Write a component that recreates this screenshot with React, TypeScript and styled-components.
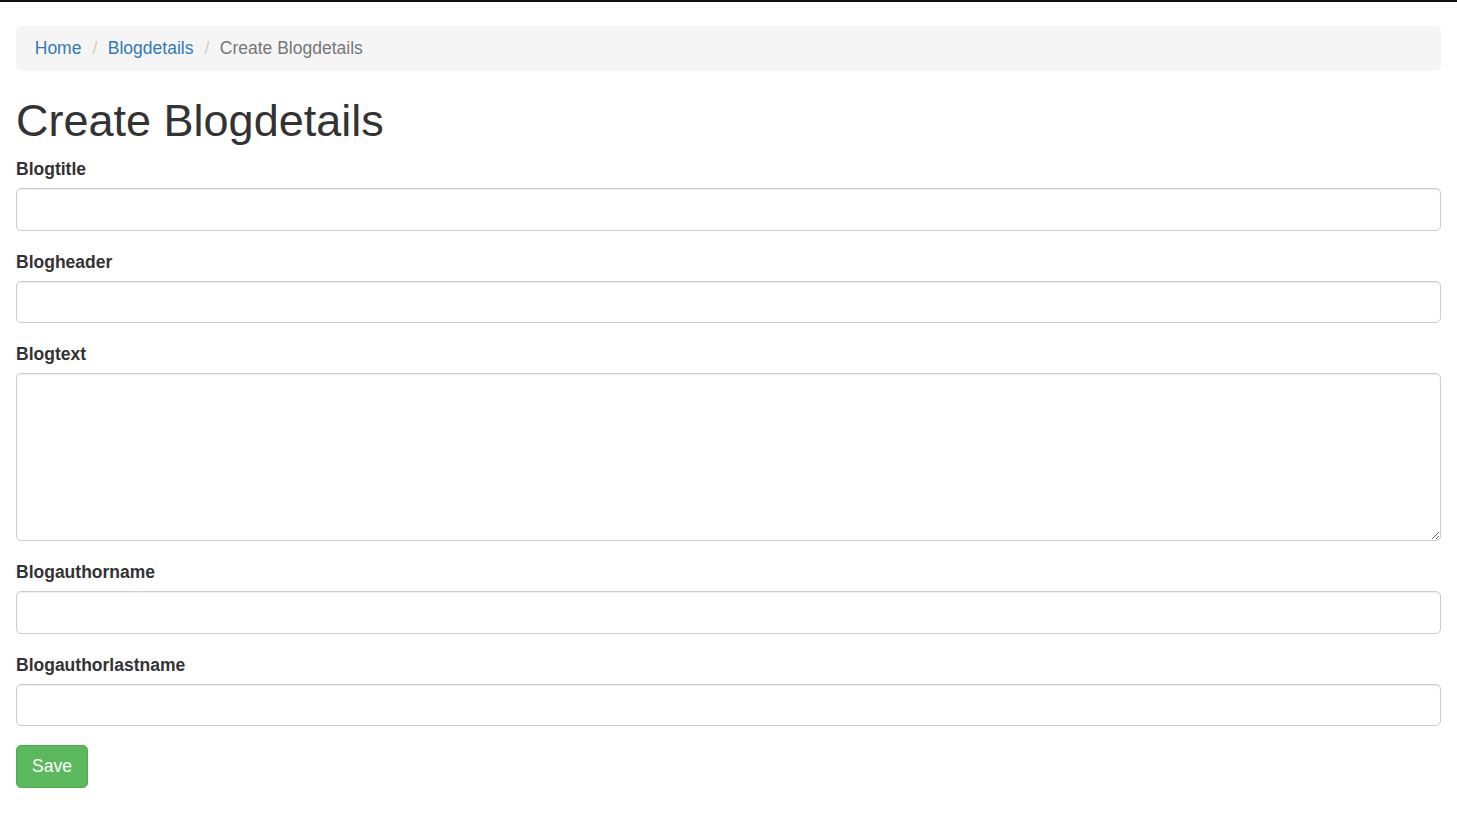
import React from "react";
import styled, { createGlobalStyle } from "styled-components";

const GlobalStyle = createGlobalStyle`
  * { box-sizing: border-box; }
  html, body { margin: 0; padding: 0; background: #fff; }
  body {
    font-family: "Liberation Sans", Arial, Helvetica, sans-serif;
    font-size: 17.5px;
    line-height: 25px;
    color: #333;
  }
`;

const TopBar = styled.div`
  height: 2px;
  background: #111;
`;

const Container = styled.div`
  padding: 24px 16px 40px;
`;

const Breadcrumb = styled.ol`
  display: flex;
  align-items: center;
  list-style: none;
  margin: 0 0 25px;
  padding: 10px 18.75px;
  background: #f5f5f5;
  border-radius: 5px;
  line-height: 25px;
`;

const Crumb = styled.li<{ $active?: boolean }>`
  color: ${(p) => (p.$active ? "#777" : "#337ab7")};
  &:not(:first-child)::before {
    content: "/";
    color: #ccc;
    padding: 0 10.5px 0 11px;
  }
`;

const CrumbLink = styled.a`
  color: #337ab7;
  text-decoration: none;
`;

const Title = styled.h1`
  margin: 25px 0 11.5px;
  font-size: 45px;
  line-height: 49.5px;
  font-weight: 500;
  color: #333;
`;

const FormGroup = styled.div`
  margin-bottom: 18.75px;
`;

const Label = styled.label`
  display: block;
  font-weight: bold;
  margin-bottom: 6.25px;
  line-height: 25px;
`;

const Input = styled.input`
  display: block;
  width: 100%;
  height: 42.5px;
  padding: 7.5px 15px;
  font: inherit;
  color: #555;
  background: #fff;
  border: 1px solid #ccc;
  border-radius: 5px;
  box-shadow: inset 0 1px 1px rgba(0, 0, 0, 0.075);
  outline: none;
`;

const TextArea = styled.textarea`
  display: block;
  width: 100%;
  height: 168px;
  padding: 7.5px 15px;
  font: inherit;
  color: #555;
  background: #fff;
  border: 1px solid #ccc;
  border-radius: 5px;
  box-shadow: inset 0 1px 1px rgba(0, 0, 0, 0.075);
  outline: none;
  resize: vertical;
`;

const SaveButton = styled.button`
  display: inline-block;
  height: 42.5px;
  padding: 7.5px 15px;
  font: inherit;
  line-height: 25px;
  color: #fff;
  background: #5cb85c;
  border: 1px solid #4cae4c;
  border-radius: 5px;
  cursor: pointer;
`;

const fields: { name: string; multiline?: boolean }[] = [
  { name: "Blogtitle" },
  { name: "Blogheader" },
  { name: "Blogtext", multiline: true },
  { name: "Blogauthorname" },
  { name: "Blogauthorlastname" },
];

export default function App() {
  return (
    <>
      <GlobalStyle />
      <TopBar />
      <Container>
        <Breadcrumb>
          <Crumb>
            <CrumbLink href="#">Home</CrumbLink>
          </Crumb>
          <Crumb>
            <CrumbLink href="#">Blogdetails</CrumbLink>
          </Crumb>
          <Crumb $active>Create Blogdetails</Crumb>
        </Breadcrumb>
        <Title>Create Blogdetails</Title>
        <form onSubmit={(e) => e.preventDefault()}>
          {fields.map((f) => (
            <FormGroup key={f.name}>
              <Label htmlFor={f.name}>{f.name}</Label>
              {f.multiline ? <TextArea id={f.name} /> : <Input id={f.name} type="text" />}
            </FormGroup>
          ))}
          <SaveButton type="submit">Save</SaveButton>
        </form>
      </Container>
    </>
  );
}
